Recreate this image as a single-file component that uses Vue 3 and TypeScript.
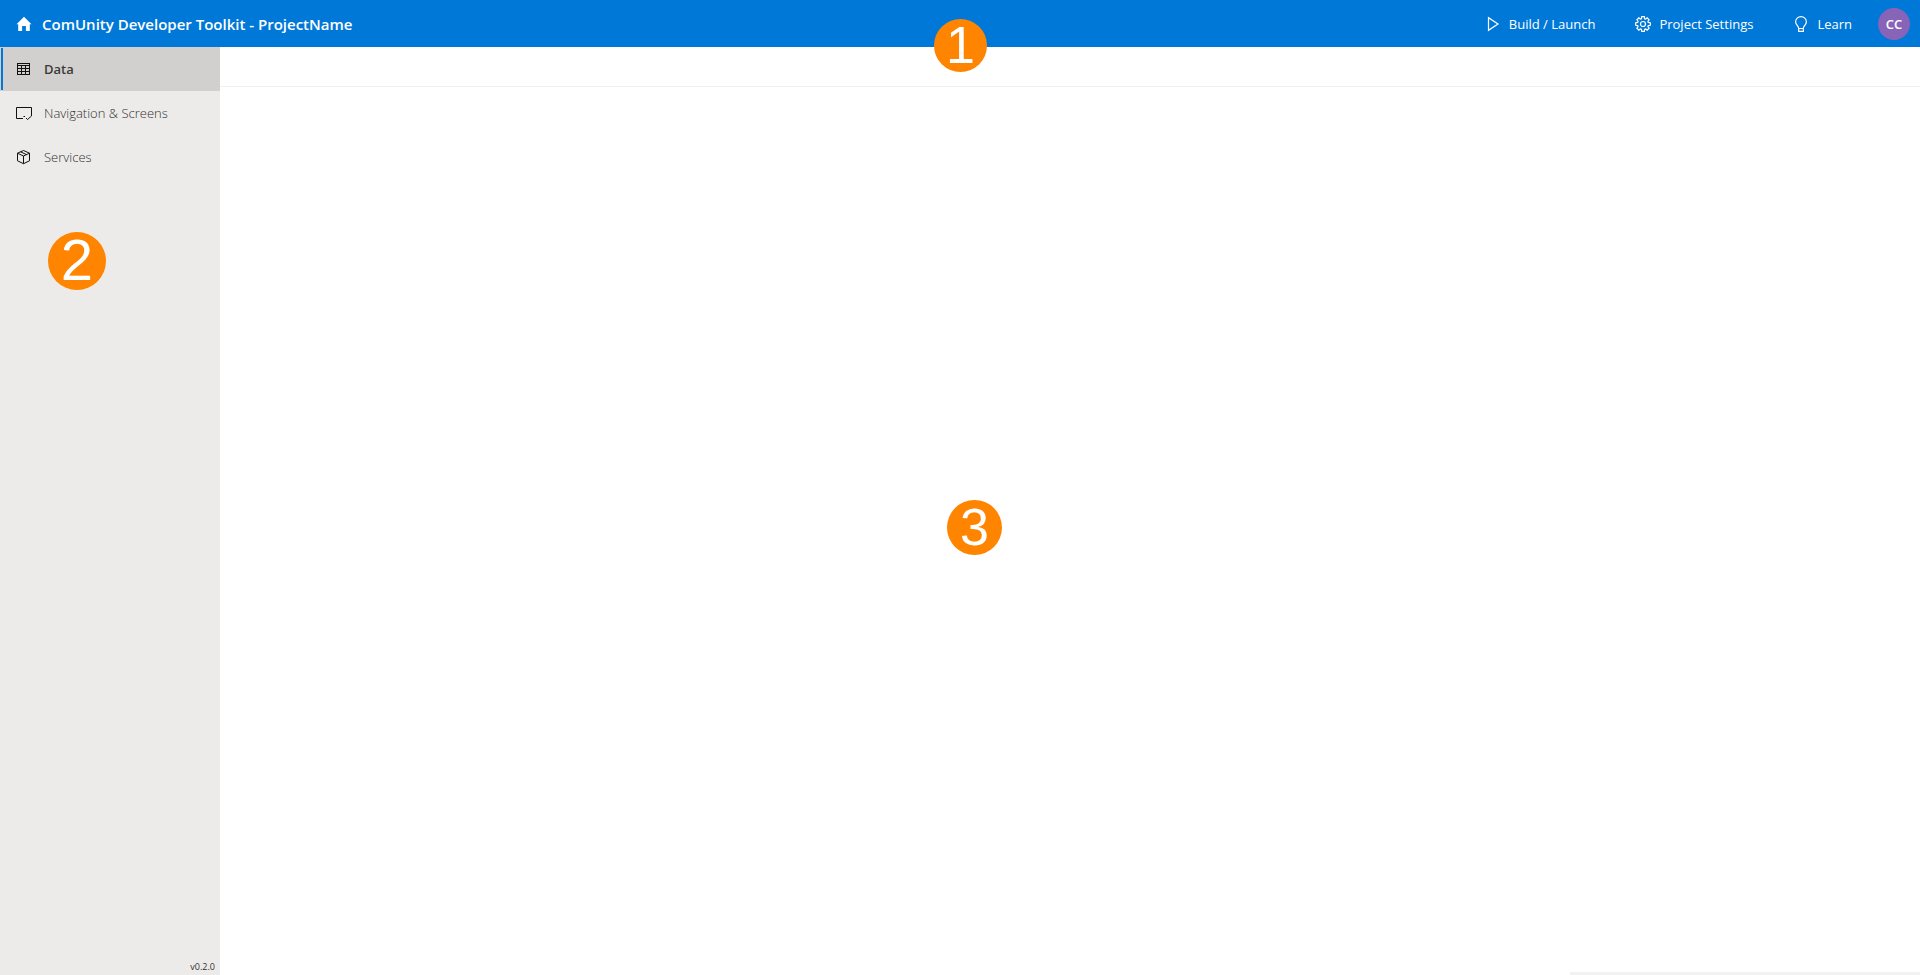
<script setup lang="ts">
import { ref } from 'vue'

type IconName = 'table' | 'screen' | 'box'

interface NavItem {
  label: string
  icon: IconName
}

const navItems: NavItem[] = [
  { label: 'Data', icon: 'table' },
  { label: 'Navigation & Screens', icon: 'screen' },
  { label: 'Services', icon: 'box' },
]

const selected = ref<string>('Data')
</script>

<template>
  <div class="shell">
    <header class="topbar">
      <a class="home" href="#">
        <svg class="home-icon" viewBox="0 0 16 16" aria-hidden="true">
          <path d="M8 .8 15.5 8.2H13.8V15H9.9V10H6.1V15H2.2V8.2H.5Z" fill="currentColor" />
        </svg>
        <span>ComUnity Developer Toolkit - ProjectName</span>
      </a>
      <div class="actions">
        <button class="action" type="button">
          <svg viewBox="0 0 16 16" aria-hidden="true">
            <path d="M3.5 1.7V14.3L13 8Z" />
          </svg>
          Build / Launch
        </button>
        <button class="action" type="button">
          <svg viewBox="0 0 16 16" aria-hidden="true">
            <path
              d="M6.7 .7H9.3L9.6 2.7L10.6 3.1L12.2 1.9L14.1 3.8L12.9 5.4L13.3 6.4L15.3 6.7V9.3L13.3 9.6L12.9 10.6L14.1 12.2L12.2 14.1L10.6 12.9L9.6 13.3L9.3 15.3H6.7L6.4 13.3L5.4 12.9L3.8 14.1L1.9 12.2L3.1 10.6L2.7 9.6L.7 9.3V6.7L2.7 6.4L3.1 5.4L1.9 3.8L3.8 1.9L5.4 3.1L6.4 2.7Z"
            />
            <circle cx="8" cy="8" r="2.5" />
          </svg>
          Project Settings
        </button>
        <button class="action" type="button">
          <svg viewBox="0 0 16 16" aria-hidden="true">
            <path
              d="M5.7 12.5C5.7 9.6 2.6 9 2.6 5.8A5.4 5.2 0 0 1 13.4 5.8C13.4 9 10.3 9.6 10.3 12.5V15.4H5.7V12.5H10.3"
            />
          </svg>
          Learn
        </button>
        <button class="avatar" type="button" aria-label="Account CC">CC</button>
      </div>
      <span class="marker marker-header">1</span>
    </header>

    <div class="body">
      <aside class="sidebar">
        <nav>
          <button
            v-for="item in navItems"
            :key="item.label"
            type="button"
            class="nav-item"
            :class="{ active: item.label === selected }"
            @click="selected = item.label"
          >
            <svg v-if="item.icon === 'table'" viewBox="0 0 16 16" shape-rendering="crispEdges" aria-hidden="true">
              <path d="M1.5 2.5H13.5V13.5H1.5ZM1 4.5H14M1 7.5H14M1 10.5H14M5.5 4V14M9.5 4V14" />
            </svg>
            <svg v-else-if="item.icon === 'screen'" viewBox="0 0 16 16" aria-hidden="true">
              <path d="M7 13.5H.5V2.5H15.5V11M7.5 11.5H9M10 13L11.5 14.5L15.5 11" />
            </svg>
            <svg v-else viewBox="0 0 16 16" aria-hidden="true">
              <path d="M7.5 1.5L13.5 4.2V11.8L7.5 14.7L1.5 11.8V4.2ZM1.5 4.2L7.5 7L13.5 4.2M7.5 7V14.7M4.5 2.8L10.5 5.6" />
            </svg>
            {{ item.label }}
          </button>
        </nav>
        <span class="version">v0.2.0</span>
        <span class="marker marker-sidebar">2</span>
      </aside>

      <main class="content">
        <div class="command-bar"></div>
        <div class="canvas"></div>
        <div class="status-strip"></div>
      </main>
    </div>
    <span class="marker marker-content">3</span>
  </div>
</template>

<style>
body {
  margin: 0;
}
</style>

<style scoped>
.shell {
  position: relative;
  display: flex;
  flex-direction: column;
  min-height: 100vh;
  background: #fff;
  font-family: 'Segoe UI', 'Open Sans', 'Noto Sans', sans-serif;
  font-size: 13px;
}

button {
  margin: 0;
  border: 0;
  font: inherit;
  cursor: pointer;
}

svg {
  flex: none;
  width: 16px;
  height: 16px;
  fill: none;
  stroke: currentColor;
  stroke-width: 1;
}

.topbar {
  position: relative;
  display: flex;
  align-items: center;
  justify-content: space-between;
  height: 47px;
  padding: 0 10px 0 16px;
  background: #0078d7;
  color: #fff;
}

.home {
  display: flex;
  align-items: center;
  gap: 10px;
  color: inherit;
  font-size: 15px;
  font-weight: 600;
  text-decoration: none;
}

.home-icon {
  stroke: none;
}

.actions {
  display: flex;
  align-items: center;
}

.action {
  display: flex;
  align-items: center;
  gap: 8px;
  margin-right: 40px;
  padding: 0;
  background: transparent;
  color: inherit;
}

.action:nth-child(3) {
  margin-right: 26px;
}

.action svg {
  stroke-width: 1.2;
}

.avatar {
  width: 32px;
  height: 32px;
  padding: 0;
  border-radius: 50%;
  background: #8764b8;
  color: #fff;
  font-weight: 600;
}

.body {
  display: flex;
  flex: 1;
}

.sidebar {
  position: relative;
  display: flex;
  flex: none;
  flex-direction: column;
  justify-content: space-between;
  width: 220px;
  background: #edebe9;
}

.nav-item {
  position: relative;
  display: flex;
  align-items: center;
  gap: 12px;
  width: 100%;
  height: 44px;
  padding: 0 16px;
  background: transparent;
  color: #323130;
  font-weight: 300;
  text-align: left;
}

.nav-item svg {
  color: #111;
}

.nav-item.active {
  background: #d2d0ce;
  color: #3b3a39;
  font-weight: 600;
}

.nav-item.active::before {
  position: absolute;
  top: 1px;
  bottom: 1px;
  left: 1px;
  width: 2px;
  background: #0078d7;
  content: '';
}

.version {
  padding: 0 5px 1px;
  color: #323130;
  font-size: 9px;
  line-height: 14px;
  text-align: right;
}

.content {
  display: flex;
  flex: 1;
  flex-direction: column;
}

.command-bar {
  height: 39px;
  border-bottom: 1px solid #f0f0f0;
}

.canvas {
  flex: 1;
}

.status-strip {
  align-self: flex-end;
  width: 350px;
  height: 3px;
  background: #f2f2f2;
}

.marker {
  position: absolute;
  box-sizing: border-box;
  display: flex;
  align-items: center;
  justify-content: center;
  padding-bottom: 2px;
  border-radius: 50%;
  background: #ff8400;
  color: #fff;
  font-family: 'Liberation Sans', Arial, sans-serif;
  line-height: 1;
}

.marker-header {
  top: 19px;
  left: calc(50% - 26px);
  width: 53px;
  height: 53px;
  font-size: 52px;
}

.marker-sidebar {
  top: 185px;
  left: 48px;
  width: 58px;
  height: 58px;
  font-size: 58px;
}

.marker-content {
  top: 500px;
  left: 947px;
  width: 55px;
  height: 55px;
  font-size: 52px;
}
</style>
